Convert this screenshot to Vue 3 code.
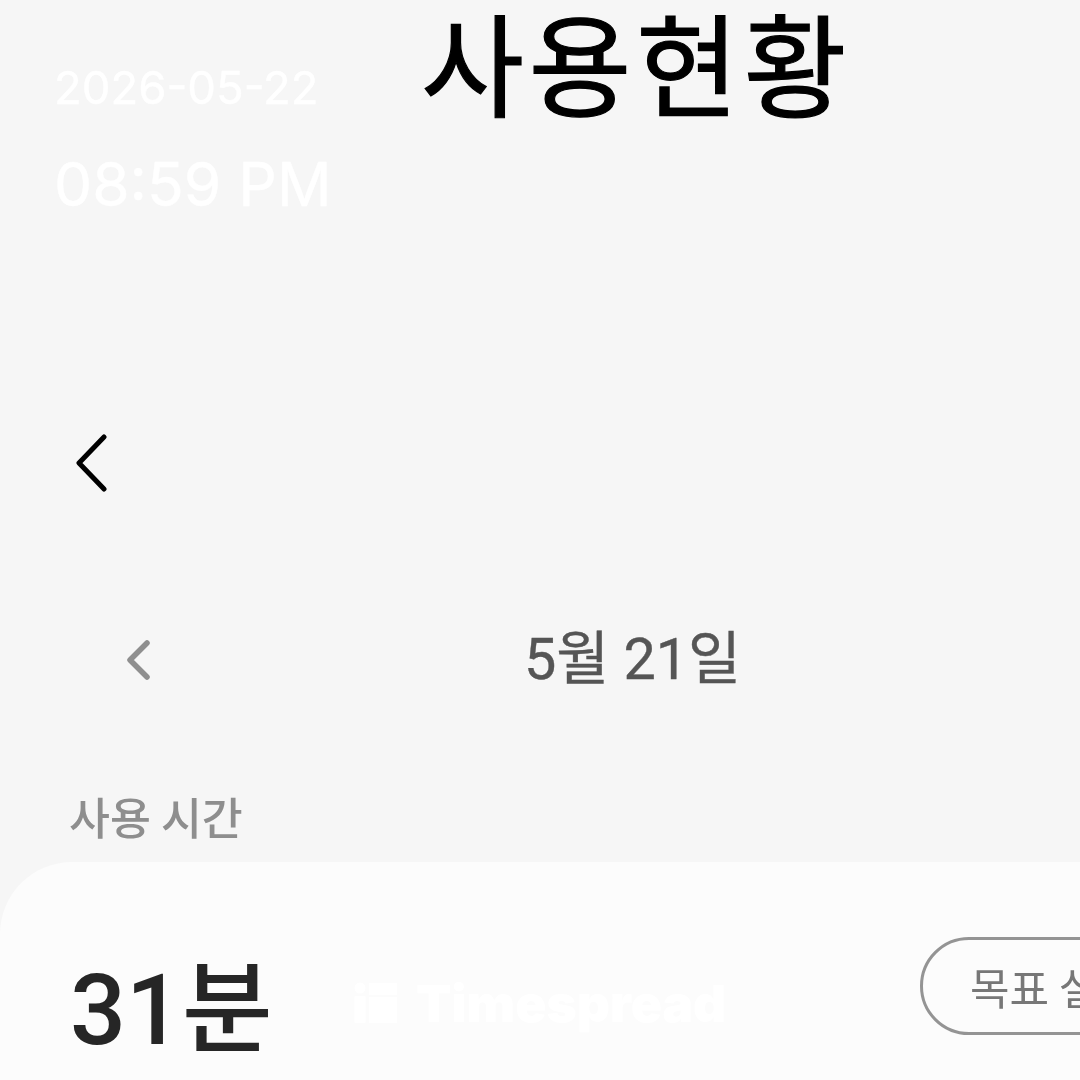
<template>
  <div class="page">
    <div class="stamp">
      <div class="stamp_date">2026-05-22</div>
      <div class="stamp_time">08:59 PM</div>
    </div>

    <h1 class="title">사용현황</h1>

    <div class="back_row">
      <svg class="back" width="36" height="62" viewBox="0 0 36 62">
        <path d="M30 3 L5 29 L30 55" />
      </svg>
    </div>

    <div class="date_row">
      <svg class="prev" width="28" height="42" viewBox="0 0 28 42">
        <path d="M22 4 L5 21 L22 38" />
      </svg>
      <span class="date_text">5월 21일</span>
    </div>

    <div class="section_label">사용 시간</div>

    <section class="card">
      <div class="card_top">
        <span class="total">31분</span>
        <button class="goal">목표 설정</button>
      </div>

      <div class="watermark">
        <svg width="44" height="42" viewBox="0 0 44 42">
          <circle cx="6" cy="6" r="5.5" />
          <rect x="0.5" y="14" width="11" height="27" rx="1" />
          <rect x="15" y="1" width="28" height="12" />
          <rect x="15" y="15" width="28" height="26" />
        </svg>
        <span>Timespread</span>
      </div>
    </section>
  </div>
</template>

<script setup>
</script>

<style>
  html, body {
    margin: 0;
    background: #f6f6f6;
  }
</style>

<style scoped>
  .page {
    position: relative;
    width: 1080px;
    height: 1080px;
    overflow: hidden;
    background-color: #f6f6f6;
    font-family: Roboto, "Noto Sans CJK KR", sans-serif;
    filter: blur(0.5px);
  }

  .stamp {
    position: absolute;
    left: 54px;
    top: 60px;
    color: #fff;
    font-family: Inter, sans-serif;
    -webkit-text-stroke: 0.4px #fff;
  }

  .stamp_date {
    font-size: 45.5px;
    line-height: 56px;
  }

  .stamp_time {
    font-size: 60.5px;
    line-height: 72px;
    margin-top: 32px;
  }

  .title {
    margin: 0;
    padding-left: 421px;
    height: 120px;
    font-family: "Noto Sans CJK KR", sans-serif;
    font-size: 112px;
    font-weight: 400;
    line-height: 120px;
    letter-spacing: 4.5px;
    -webkit-text-stroke: 1.2px #000;
    color: #000;
    white-space: nowrap;
  }

  .back_row {
    height: 62px;
    margin-top: 314px;
    padding-left: 74px;
  }

  .back path,
  .prev path {
    fill: none;
    stroke-linecap: round;
    stroke-linejoin: round;
  }

  .back path {
    stroke: #000;
    stroke-width: 5;
  }

  .date_row {
    position: relative;
    display: flex;
    align-items: center;
    justify-content: center;
    height: 70px;
    margin-top: 123px;
    padding-left: 185px;
  }

  .prev {
    position: absolute;
    left: 125px;
    top: 20px;
  }

  .prev path {
    stroke: #8f8f8f;
    stroke-width: 5.5;
  }

  .date_text {
    font-size: 57.5px;
    color: #555;
    -webkit-text-stroke: 0.4px #555;
  }

  .section_label {
    margin-top: 97px;
    padding-left: 69px;
    font-family: "Noto Sans CJK KR", sans-serif;
    font-size: 44.5px;
    line-height: 60px;
    font-weight: 500;
    color: #8e8e8e;
  }

  .card {
    position: relative;
    height: 300px;
    margin-top: 16px;
    background-color: #fcfcfc;
    border-radius: 72px 0 0 0;
    padding: 75px 0 0 70px;
  }

  .card_top {
    display: flex;
    align-items: flex-start;
    justify-content: space-between;
  }

  .total {
    margin-top: 19px;
    font-size: 98.5px;
    font-weight: 500;
    color: #262626;
    line-height: 110px;
  }

  .goal {
    flex-shrink: 0;
    width: 280px;
    height: 98px;
    margin-right: -120px;
    padding: 0 0 0 47px;
    text-align: left;
    white-space: nowrap;
    border: 3px solid #949494;
    border-radius: 49px;
    background: transparent;
    color: #777;
    font-family: "Noto Sans CJK KR", sans-serif;
    font-size: 43px;
  }

  .watermark {
    position: absolute;
    left: 354px;
    top: 110px;
    display: flex;
    align-items: center;
    gap: 18px;
    color: #fff;
    font-family: Inter, sans-serif;
    font-size: 51.5px;
    font-weight: 900;
  }

  .watermark svg {
    fill: #fff;
  }
</style>
